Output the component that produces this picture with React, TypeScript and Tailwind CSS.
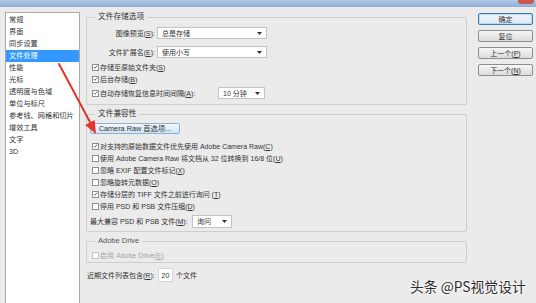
import React from "react";

const FONT = "font-['Liberation_Sans','Noto_Sans_CJK_SC',sans-serif]";

const Mn = ({ k }: { k: string }) => <span className="underline">{k}</span>;

const Check = ({ checked, disabled }: { checked?: boolean; disabled?: boolean }) => (
  <span
    className={`flex h-[7px] w-[7px] shrink-0 items-center justify-center border bg-white ${
      disabled ? "border-[#c4c4c4]" : "border-[#8e8e8e]"
    }`}
  >
    {checked && (
      <svg viewBox="0 0 7 7" className="h-[6px] w-[6px]">
        <path d="M1 3.6 L2.7 5.3 L6 1.4" fill="none" stroke="#3b5e8c" strokeWidth="1.3" />
      </svg>
    )}
  </span>
);

const Select = ({ value, className }: { value: string; className: string }) => (
  <div
    className={`flex h-full shrink-0 items-center justify-between border border-[#c3c3c3] bg-white pl-[4px] pr-[4px] ${className}`}
  >
    <span>{value}</span>
    <svg viewBox="0 0 5 3" className="h-[3px] w-[5px]">
      <path d="M0 0 H5 L2.5 3 Z" fill="#333" />
    </svg>
  </div>
);

const CheckRow = ({
  checked,
  disabled,
  children,
  className = "h-[12px]",
}: {
  checked?: boolean;
  disabled?: boolean;
  children: React.ReactNode;
  className?: string;
}) => (
  <div className={`flex items-center gap-[1px] pl-[5px] ${className} ${disabled ? "text-[#a3a3a3]" : ""}`}>
    <Check checked={checked} disabled={disabled} />
    <span className="whitespace-nowrap">{children}</span>
  </div>
);

const navItems = [
  "常规",
  "界面",
  "同步设置",
  "文件处理",
  "性能",
  "光标",
  "透明度与色域",
  "单位与标尺",
  "参考线、网格和切片",
  "增效工具",
  "文字",
  "3D",
];

const SideButton = ({ label, primary }: { label: React.ReactNode; primary?: boolean }) => (
  <button
    className={`flex h-[12px] w-[55px] items-center justify-center rounded-[2px] border bg-gradient-to-b ${
      primary
        ? "border-[#3d7bb6] from-[#f3f8fc] to-[#d9e7f3] shadow-[inset_0_0_0_1px_#b9daf3]"
        : "border-[#8d8d8d] from-[#f6f6f6] to-[#dcdcdc]"
    }`}
  >
    {label}
  </button>
);

export default function App() {
  return (
    <div
      className={`relative h-[303px] w-[536px] overflow-hidden bg-[#ebebeb] text-[7px] leading-none text-[#333] ${FONT}`}
    >
      {/* title bar, cut off by the crop */}
      <div className="flex h-[7px] items-start justify-end bg-gradient-to-b from-[#b3c9e5] to-[#8eadd5]">
        <span className="mr-[2px] h-[4px] w-[16px] rounded-b-[3px] bg-[#c65a50]" />
      </div>

      <div className="flex h-[296px]">
        {/* category list */}
        <div className="ml-[5px] mt-[5px] h-[300px] w-[75px] border border-[#a8a8a8] bg-white pt-[1px] text-[7.2px]">
          {navItems.map((item) => (
            <div
              key={item}
              className={`flex h-[12px] items-center whitespace-nowrap pl-[3px] ${
                item === "文件处理" ? "bg-[#3399ff] text-white" : ""
              }`}
            >
              {item}
            </div>
          ))}
        </div>

        {/* settings */}
        <div className="ml-[6px] mt-[5px] flex w-[381px] flex-col">
          <fieldset className="rounded-[2px] border border-[#cdcdcd] pb-[5px]">
            <legend className="ml-[8px] h-[10px] px-[3px] text-[7.7px] leading-[10px]">文件存储选项</legend>
            <div className="mt-[5px] flex h-[12px] items-center">
              <span className="w-[68px] text-right">
                图像预览(<Mn k="S" />):
              </span>
              <Select value="总是存储" className="ml-[2px] w-[110px]" />
            </div>
            <div className="mt-[7px] flex h-[12px] items-center">
              <span className="w-[68px] text-right">
                文件扩展名(<Mn k="E" />):
              </span>
              <Select value="使用小写" className="ml-[2px] w-[110px]" />
            </div>
            <CheckRow checked className="mt-[4px] h-[10px]">
              存储至原始文件夹(<Mn k="S" />)
            </CheckRow>
            <CheckRow checked className="mt-[2px] h-[10px]">
              后台存储(<Mn k="B" />)
            </CheckRow>
            <div className="mt-[3px] flex h-[12px] items-center gap-[1px] pl-[5px]">
              <Check checked />
              <span className="w-[117px] whitespace-nowrap">
                自动存储恢复信息时间间隔(<Mn k="A" />):
              </span>
              <Select value="10 分钟" className="w-[47px]" />
            </div>
          </fieldset>

          <fieldset className="mt-[4px] rounded-[2px] border border-[#cdcdcd] pb-[3px]">
            <legend className="ml-[8px] h-[10px] px-[3px] text-[7.7px] leading-[10px]">文件兼容性</legend>
            <button className="ml-[3px] mt-[4px] flex h-[11px] w-[90px] items-center justify-center rounded-[2px] border border-[#8fb0cf] bg-gradient-to-b from-[#f4f9fe] to-[#cfe2f4] text-[7.3px]">
              Camera Raw 首选项...
            </button>
            <div className="mt-[6px]">
              <CheckRow checked>
                对支持的原始数据文件优先使用 Adobe Camera Raw(<Mn k="C" />)
              </CheckRow>
              <CheckRow>
                使用 Adobe Camera Raw 将文档从 32 位转换到 16/8 位(<Mn k="U" />)
              </CheckRow>
              <CheckRow>
                忽略 EXIF 配置文件标记(<Mn k="X" />)
              </CheckRow>
              <CheckRow>
                忽略旋转元数据(<Mn k="O" />)
              </CheckRow>
              <CheckRow checked>
                存储分层的 TIFF 文件之前进行询问 (<Mn k="T" />)
              </CheckRow>
              <CheckRow>
                停用 PSD 和 PSB 文件压缩(<Mn k="D" />)
              </CheckRow>
            </div>
            <div className="mt-[3px] flex h-[13px] items-center pl-[3px]">
              <span className="w-[102px] whitespace-nowrap">
                最大兼容 PSD 和 PSB 文件(<Mn k="M" />):
              </span>
              <Select value="询问" className="w-[40px]" />
            </div>
          </fieldset>

          <fieldset className="mt-[4px] rounded-[2px] border border-[#cdcdcd] pb-[1px]">
            <legend className="ml-[8px] h-[10px] px-[3px] text-[7.5px] leading-[10px] text-[#555]">
              Adobe Drive
            </legend>
            <CheckRow disabled className="mt-[3px] h-[12px]">
              启用 Adobe Drive(<Mn k="E" />)
            </CheckRow>
          </fieldset>

          <div className="mt-[5px] flex h-[14px] items-center pl-[1px]">
            <span className="w-[71px] whitespace-nowrap">
              近期文件列表包含(<Mn k="R" />):
            </span>
            <span className="flex h-full w-[15px] items-center justify-center border border-[#d6d6d6] bg-white">
              20
            </span>
            <span className="ml-[3px]">个文件</span>
          </div>
        </div>

        {/* dialog buttons */}
        <div className="ml-[11px] mt-[6px] flex flex-col gap-[5px]">
          <SideButton primary label="确定" />
          <SideButton label="复位" />
          <SideButton
            label={
              <>
                上一个(<Mn k="P" />)
              </>
            }
          />
          <SideButton
            label={
              <>
                下一个(<Mn k="N" />)
              </>
            }
          />
        </div>
      </div>

      {/* red annotation arrow */}
      <svg className="pointer-events-none absolute left-0 top-0 h-[303px] w-[536px]" viewBox="0 0 536 303">
        <line x1="59" y1="64" x2="90.5" y2="123" stroke="#e3352b" strokeWidth="2" strokeLinecap="round" />
        <polygon points="96,134 94.6,120 85.2,125" fill="#e3352b" />
      </svg>

      {/* watermark */}
      <div className="absolute left-[410px] top-[280px] whitespace-nowrap font-['Noto_Sans_CJK_SC',sans-serif] text-[13.8px] leading-none text-[#2b2b2b] [text-shadow:0_0_2px_#fff,0_0_2px_#fff]">
        头条 @PS视觉设计
      </div>
    </div>
  );
}
